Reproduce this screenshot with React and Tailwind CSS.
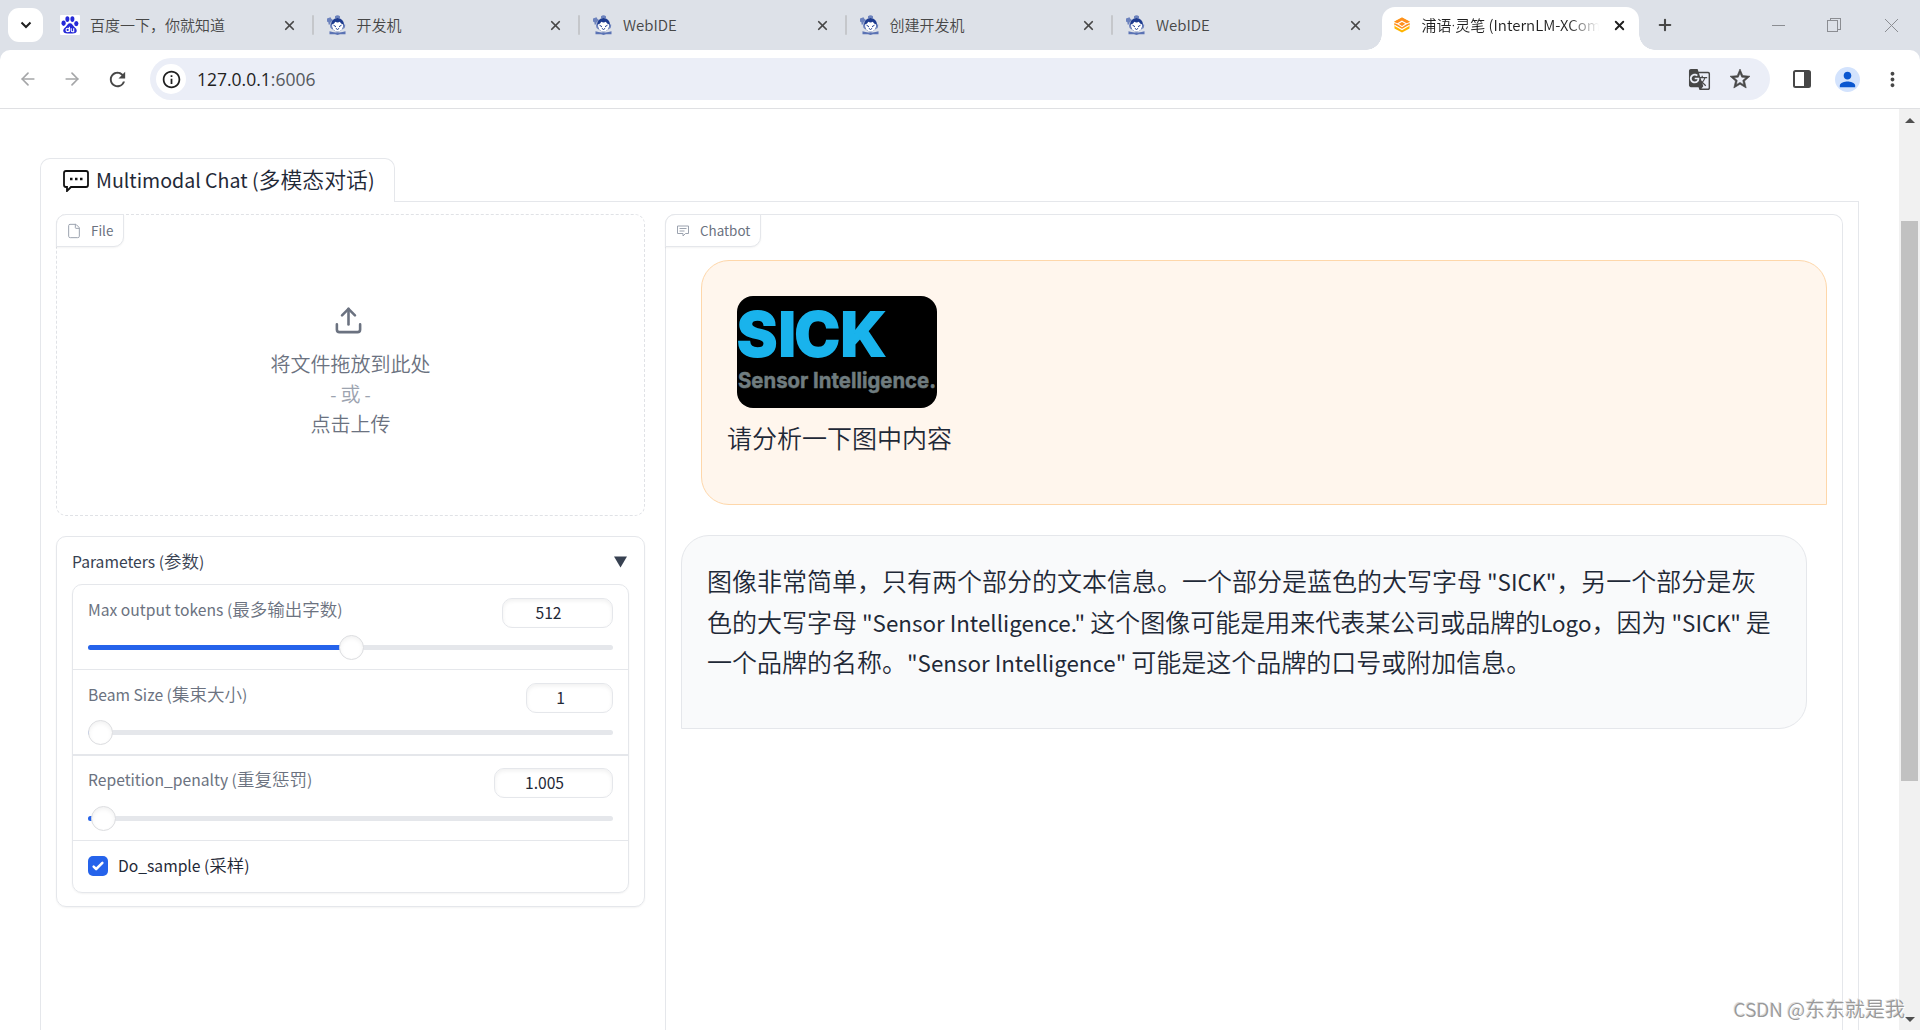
import { Fragment } from 'react';
import { Upload, File, X, Plus, ArrowLeft, ArrowRight } from 'lucide-react';
import { MdRefresh, MdGTranslate, MdStarOutline, MdMoreVert, MdPerson, MdOutlineInfo } from 'react-icons/md';

const TABS = [
  { title: '百度一下，你就知道', icon: 'baidu' },
  { title: '开发机', icon: 'monk' },
  { title: 'WebIDE', icon: 'monk' },
  { title: '创建开发机', icon: 'monk' },
  { title: 'WebIDE', icon: 'monk' },
];

const SLIDERS = [
  {
    label: 'Max output tokens (最多输出字数)',
    value: '512',
    fill: 263,
    row: 'h-[85px] pt-[11px] border-b',
    box: 'w-[111px]',
    track: 'mt-[17px]',
  },
  {
    label: 'Beam Size (集束大小)',
    value: '1',
    fill: 12.5,
    row: 'h-[86px] pt-[11px] border-b-2',
    box: 'w-[87px]',
    track: 'mt-[17px]',
  },
  {
    label: 'Repetition_penalty (重复惩罚)',
    value: '1.005',
    fill: 15.5,
    row: 'h-[85px] pt-2.5 border-b',
    box: 'w-[119px]',
    track: 'mt-[18px]',
  },
];

const ANSWER = [
  '图像非常简单，只有两个部分的文本信息。一个部分是蓝色的大写字母 "SICK"，另一个部分是灰',
  '色的大写字母 "Sensor Intelligence." 这个图像可能是用来代表某公司或品牌的Logo，因为 "SICK" 是',
  '一个品牌的名称。"Sensor Intelligence" 可能是这个品牌的口号或附加信息。',
];

// Latin runs are set a little smaller and heavier than the Chinese around them
function Mixed({ children }) {
  return children.split(/([\x20-\x7e]+)/).map((run, i) =>
    i % 2 ? (
      <span key={i} className="text-[0.895em] leading-none font-normal whitespace-pre">{run}</span>
    ) : (
      <Fragment key={i}>{run}</Fragment>
    )
  );
}

function BaiduIcon() {
  return (
    <svg viewBox="0 0 20 20" className="w-5 h-5 shrink-0">
      <rect width="20" height="20" rx="1" fill="#fff" />
      <g fill="#2529d8">
        <ellipse cx="3.6" cy="8.2" rx="2.1" ry="2.7" />
        <ellipse cx="7.4" cy="4.1" rx="2" ry="2.8" />
        <ellipse cx="12.4" cy="4.1" rx="2" ry="2.8" />
        <ellipse cx="16.3" cy="8.6" rx="2.1" ry="2.6" />
        <path d="M10 8.2c2.2 0 2.7 2 4.1 3.5 1.5 1.4 3 2.6 2.6 4.6-.5 2.5-3.2 2.3-6.7 2.1-3.5.2-6.2.4-6.7-2.1-.4-2 1.1-3.2 2.6-4.6C7.3 10.2 7.8 8.2 10 8.2z" />
      </g>
      <g fill="none" stroke="#fff" strokeWidth="1.1">
        <circle cx="7.7" cy="14.9" r="1.7" />
        <path d="M9.4 11.8v4.9M11.2 13.2v2.3q0 1.2 1.2 1.2h1.3v-3.5" />
      </g>
    </svg>
  );
}

function MonkIcon() {
  return (
    <svg viewBox="0 0 20 20" className="w-5 h-5 shrink-0">
      <path d="M8 3V1.2Q10.5-.8 13 1.2V3zM0 3.5l3.5-1.3 1 1.8L6 5 3.5 7.500V9.500H1.500V7.500L0 6.500z" fill="#6c82bd" />
      <ellipse cx="10.5" cy="9.8" rx="6.6" ry="6.8" fill="#1d3b8f" />
      <path d="M3 9.500h2v4.500q-2-.5-2-4.500zM18.200 9.500h-2V14q2-.5 2-4.500z" fill="#6c82bd" />
      <path d="M5 9.500q2.500-.5 3.300-2.700 1.200.8 2.300.8t2.200-.8q1 2.200 3.300 2.700.3 3.300-1.300 5.200-1.600 1.800-4.200 1.800t-4.300-1.800Q4.700 12.800 5 9.500z" fill="#fff" />
      <path d="M6.500 10.200l2.500 1.500M14.500 10.200L12 11.700M8.800 13.300l1.700 1.200 1.700-1.200" stroke="#1d3b8f" fill="none" />
      <path d="M2.500 16.300q4 1.500 8 1 4 .5 8-1v2.900H13l-2.500.8-2.500-.8H2.500z" fill="#5b73b4" />
    </svg>
  );
}

function InternIcon() {
  return (
    <svg viewBox="0 0 16 16" className="w-4 h-4 shrink-0">
      <path d="M8 .5l7.500 4v7L8 15.500l-7.500-4v-7z" fill="#ffb400" />
      <path d="M8 .5l7.500 4V8L8 12 .5 8V4.500z" fill="#ff8f1f" />
      <path d="M8 4.200l4.300 2.600L8 9.600 3.700 6.800zM.5 8.300L8 12.500l7.500-4.200" fill="none" stroke="#fff" strokeWidth="1.1" />
      <path d="M0 5.500l3.700 1.300M16 5.500l-3.700 1.300" stroke="#fff" />
    </svg>
  );
}

function TabStrip() {
  return (
    <div className="flex h-[50px] bg-[#dde1e8] text-[15px] text-[#474747]">
      <div className="w-[35px] h-[34px] ml-2 mt-2 rounded-[11px] bg-white flex items-center justify-center">
        <svg viewBox="0 0 12 8" className="w-3 h-2" fill="none" stroke="#1f1f1f" strokeWidth="2">
          <path d="M1.5 1.5L6 6l4.5-4.5" />
        </svg>
      </div>
      <div className="flex ml-1">
        {TABS.map((tab, i) => (
          <div key={i} className="flex items-center w-[266.5px] pl-[13px]">
            {tab.icon === 'baidu' ? <BaiduIcon /> : <MonkIcon />}
            <span className="ml-2.5 flex-1 whitespace-nowrap font-[350]">{tab.title}</span>
            <X className="w-[15px] h-[15px] mr-[15px]" strokeWidth={2.8} />
            <span className={i < 4 ? 'w-0.5 h-5 rounded bg-[#c5c7cb]' : 'w-0.5'} />
          </div>
        ))}
      </div>
      <div className="relative flex items-center w-[257px] mt-[7px] ml-0.5 pl-3 pb-[7px] bg-white rounded-t-[13px] text-[#1f1f1f]">
        <span className="absolute bottom-0 -left-4 w-4 h-4 bg-[radial-gradient(circle_at_0_0,transparent_15.5px,#fff_16px)]" />
        <span className="absolute bottom-0 -right-4 w-4 h-4 bg-[radial-gradient(circle_at_100%_0,transparent_15.5px,#fff_16px)]" />
        <InternIcon />
        <span className="ml-3 w-[177px] overflow-hidden whitespace-nowrap font-[350] mask-r-from-82% mask-r-to-100%">
          浦语<span className="font-['Noto_Sans']">·</span>灵笔 (InternLM-XComposer)
        </span>
        <X className="w-[15px] h-[15px] ml-[13px]" strokeWidth={3} />
      </div>
      <div className="flex flex-1 items-center">
        <Plus className="w-[18px] h-[18px] ml-[17px]" strokeWidth={2.8} />
        <svg viewBox="0 0 128 16" className="w-32 h-4 ml-[98px]" fill="none" stroke="#8b8d92" shapeRendering="crispEdges">
          <path d="M0 8.5h13" />
          <path d="M55.5 3.5h10v11h-10zM58.5 3V1.5h10v11H66" />
          <path d="M113 2l13 13M126 2l-13 13" shapeRendering="auto" />
        </svg>
      </div>
    </div>
  );
}

function Toolbar() {
  return (
    <div className="bg-[#dde1e8]">
      <div className="flex items-center h-[59px] bg-white border-b border-[#dfe0e3] rounded-t-[10px] text-[#474747]">
        <ArrowLeft className="w-5 h-5 ml-[18px] text-[#a5a6a8]" />
        <ArrowRight className="w-5 h-5 ml-6 text-[#a5a6a8]" />
        <MdRefresh className="w-[23px] h-[23px] ml-[24px]" />
        <div className="flex items-center w-[1620px] h-[42px] ml-[21px] pl-1.5 rounded-full bg-[#ebeef7]">
          <div className="w-[30px] h-[30px] rounded-full bg-white flex items-center justify-center">
            <MdOutlineInfo className="w-[21px] h-[21px] text-[#1f1f1f]" />
          </div>
          <span className="ml-[11px] flex-1 font-['Open_Sans',sans-serif] text-[17.5px] text-[#1f1f1f]">
            127.0.0.1<span className="text-[#55585d]">:6006</span>
          </span>
          <MdGTranslate className="w-[23px] h-[23px]" />
          <MdStarOutline className="w-6 h-6 ml-[17px] mr-[18px]" stroke="currentColor" strokeWidth="0.6" />
        </div>
        <svg viewBox="0 0 18 18" className="w-[18px] h-[18px] ml-[23px]">
          <rect x="1" y="1" width="16" height="16" rx="1.5" fill="none" stroke="#474747" strokeWidth="2" />
          <path d="M11 1h6v16h-6z" fill="#474747" />
        </svg>
        <div className="w-[25px] h-[25px] ml-[24px] rounded-full bg-[#d3e3fd] flex items-center justify-center">
          <MdPerson className="w-[23px] h-[23px] text-[#0b57d0]" />
        </div>
        <MdMoreVert className="w-[23px] h-[23px] ml-[21px]" />
      </div>
    </div>
  );
}

function BlockLabel({ icon, children }) {
  return (
    <div className="flex items-center w-fit h-[33px] pl-[9px] pr-2.5 gap-[9px] -mt-px -ml-px bg-white border border-[#e5e7eb] rounded-tl-[10px] rounded-br-[10px] shadow-xs text-[15px] text-[#6b7280]">
      {icon}
      <span><Mixed>{children}</Mixed></span>
    </div>
  );
}

function FileDrop() {
  return (
    <div className="h-[302px] border border-dashed border-[#e0e2e6] rounded-[10px]">
      <BlockLabel icon={<File className="w-4 h-4 text-[#9ca3af]" strokeWidth={1.5} />}>File</BlockLabel>
      <div className="flex flex-col items-center mt-[58px] text-[20px] leading-[30px] text-[#6b7280] font-[350]">
        <Upload className="w-[31px] h-[31px] mr-1 mb-[13px]" strokeWidth={2} />
        <span>将文件拖放到此处</span>
        <span className="h-[30px] text-[#9ca3af]"><Mixed>- 或 -</Mixed></span>
        <span>点击上传</span>
      </div>
    </div>
  );
}

function SliderRow({ label, value, fill, row, box, track }) {
  return (
    <div className={`${row} px-[15px] border-[#e5e7eb]`}>
      <div className="flex justify-between text-[17.5px] leading-[26px] text-[#6b7280] font-[350]">
        <span><Mixed>{label}</Mixed></span>
        <span className={`${box} h-[30px] mt-0.5 pr-[18px] flex items-center justify-center border border-[#e5e7eb] rounded-[10px] shadow-[inset_0_2px_4px_rgba(0,0,0,0.06)] text-[#1f2937]`}>
          <Mixed>{value}</Mixed>
        </span>
      </div>
      <div className={`${track} relative h-[5px] rounded-full bg-[#e5e7eb]`}>
        <div className="h-full rounded-full bg-[#2563eb]" style={{ width: fill }} />
        <div
          className="absolute -top-2.5 w-[25px] h-[25px] -ml-[12.5px] rounded-full bg-white border border-[#dcdde0] shadow-[inset_0_2px_4px_rgba(0,0,0,0.06)]"
          style={{ left: fill }}
        />
      </div>
    </div>
  );
}

function Parameters() {
  return (
    <div className="h-[371px] mt-5 px-[15px] border border-[#e5e7eb] rounded-[10px] shadow-xs">
      <div className="flex items-center justify-between h-[47px] text-[17.5px] text-[#374151] font-[350]">
        <span className="pt-px"><Mixed>Parameters (参数)</Mixed></span>
        <svg viewBox="0 0 14 12" className="w-[13px] h-3 mt-[3px] mr-0.5"><path d="M0 0h14L7 12z" fill="#374151" /></svg>
      </div>
      <div className="h-[309px] border border-[#e5e7eb] rounded-[10px] shadow-xs">
        {SLIDERS.map((s) => (
          <SliderRow key={s.label} {...s} />
        ))}
        <div className="flex items-center h-[50px] px-[15px] text-[17.5px] text-[#1f2937] font-[350]">
          <div className="w-5 h-5 rounded-[5px] bg-[#2563eb] flex items-center justify-center">
            <svg viewBox="0 0 16 16" className="w-5 h-5" fill="#fff">
              <path d="M12.207 4.793a1 1 0 010 1.414l-5 5a1 1 0 01-1.414 0l-2-2a1 1 0 011.414-1.414L6.5 9.086l4.293-4.293a1 1 0 011.414 0z" />
            </svg>
          </div>
          <span className="ml-2.5 pb-0.5"><Mixed>Do_sample (采样)</Mixed></span>
        </div>
      </div>
    </div>
  );
}

function SickLogo() {
  return (
    <svg viewBox="0 0 200 112" className="w-[200px] h-28 ml-2.5 rounded-2xl bg-black">
      <text x="0 41.500 57.500 103.500" y="60" fontFamily="Inter, sans-serif" fontWeight="800" fontSize="61" fill="#19b3ec" stroke="#19b3ec" strokeWidth="2">SICK</text>
      <text x="1" y="91.500" textLength="198" lengthAdjust="spacingAndGlyphs" fontFamily="Inter, sans-serif" fontWeight="700" fontSize="22" fill="#6f7c7f" stroke="#6f7c7f" strokeWidth="0.5">Sensor Intelligence.</text>
    </svg>
  );
}

function Chatbot() {
  const bubble = 'border text-[25px] leading-[40.5px] text-[#1f2937] font-[350]';
  return (
    <div className="flex-1 border border-b-0 border-[#e5e7eb] rounded-t-[10px]">
      <BlockLabel
        icon={
          <svg viewBox="0 0 16 16" className="w-4 h-4" fill="none" stroke="#9ca3af">
            <path d="M2.500 3h11v7.500h-3L8 13v-2.500H2.500zM4.500 5.500h7M4.500 8h5" />
          </svg>
        }
      >
        Chatbot
      </BlockLabel>
      <div className={`${bubble} h-[245px] mt-[13px] ml-[35px] mr-[15px] pt-[35px] pl-[25px] bg-[#fff6ed] border-[#fed7aa] rounded-[28px] rounded-br-none`}>
        <SickLogo />
        <p className="mt-[9px]">请分析一下图中内容</p>
      </div>
      <div className={`${bubble} h-[194px] mt-[30px] ml-[15px] mr-[35px] pt-[24px] pl-[25px] bg-[#f9fafb] border-[#e5e7eb] rounded-[28px] rounded-bl-none`}>
        {ANSWER.map((line) => (
          <p key={line} className="h-[40.5px] whitespace-nowrap"><Mixed>{line}</Mixed></p>
        ))}
      </div>
    </div>
  );
}

function Scrollbar() {
  return (
    <div className="flex flex-col items-center justify-between w-[21px] bg-[#f1f1f1]">
      <svg viewBox="0 0 10 5" className="w-2.5 h-[5px] mt-[9px]"><path d="M0 5l5-5 5 5z" fill="#505050" /></svg>
      <div className="w-[17px] h-[560px] mt-[98px] mb-auto bg-[#c1c1c1]" />
      <svg viewBox="0 0 10 5" className="w-2.5 h-[5px] mb-[8px]"><path d="M0 0l5 5 5-5z" fill="#505050" /></svg>
    </div>
  );
}

export default function App() {
  return (
    <div className="relative flex flex-col w-[1920px] h-[1030px] overflow-hidden bg-white font-['Noto_Sans_CJK_SC',sans-serif]">
      <TabStrip />
      <Toolbar />
      <div className="flex flex-1 min-h-0">
        <div className="flex flex-col flex-1 pt-[49px] px-10">
          <div className="flex h-11">
            <div className="flex items-center w-[355px] pl-[22px] pb-[3px] border border-b-0 border-[#e5e7eb] rounded-t-[10px] text-[21.875px] text-[#1f2937] font-[350]">
              <svg viewBox="0 0 26 22" className="w-[26px] h-[22px] mt-[3px] mr-[7px]" fill="none" stroke="#111" strokeWidth="1.8">
                <path d="M3 1h20q2 0 2 2v12q0 2-2 2H8l-4 4v-4H3q-2 0-2-2V3q0-2 2-2z" />
                <path d="M7 9h2.500M12 9h2.500M17 9h2.500" strokeWidth="2.5" />
              </svg>
              <span className="whitespace-nowrap"><Mixed>Multimodal Chat (多模态对话)</Mixed></span>
            </div>
            <div className="flex-1 border-b border-[#e5e7eb]" />
          </div>
          <div className="flex flex-1 gap-5 border-x border-[#e5e7eb] pt-3 px-[15px]">
            <div className="w-[589px]">
              <FileDrop />
              <Parameters />
            </div>
            <Chatbot />
          </div>
        </div>
        <Scrollbar />
      </div>
      <span className="absolute right-[15px] bottom-1.5 text-[20px] leading-[30px] text-[#999] font-[350] [text-shadow:1px_1px_0_#fff,-1px_-1px_0_#ddd]">
        <span className="text-[19px] leading-none">CSDN @</span>东东就是我
      </span>
    </div>
  );
}
